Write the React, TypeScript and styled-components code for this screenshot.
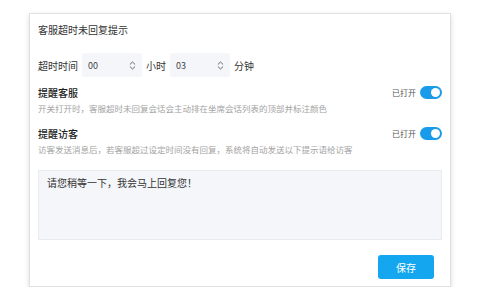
import styled, { createGlobalStyle } from 'styled-components'

const GlobalStyle = createGlobalStyle`
  html, body {
    margin: 0;
    padding: 0;
    background: #fff;
  }
  body {
    font-family: "Noto Sans CJK SC", "Noto Sans", sans-serif;
    color: #333;
  }
`

const Page = styled.div`
  padding: 13px 29px 0;
`

const Card = styled.div`
  width: 422px;
  height: 274px;
  box-sizing: border-box;
  border: 1px solid #e0e0e0;
  background: #fff;
  box-shadow: 0 2px 5px rgba(0, 0, 0, 0.14);
  padding: 9px 8px 0;
  display: flex;
  flex-direction: column;
`

const Title = styled.div`
  font-size: 10px;
  line-height: 14px;
  color: #333;
`

const TimeRow = styled.div`
  display: flex;
  align-items: center;
  margin-top: 16px;
  height: 24px;
  font-size: 10px;
  gap: 4px;
`

const Select = styled.div`
  width: 60px;
  height: 24px;
  box-sizing: border-box;
  background: #f4f6f9;
  border-radius: 2px;
  display: flex;
  align-items: center;
  justify-content: space-between;
  padding: 0 6px;
  font-size: 9px;
  color: #444;
`

const Chevron = () => (
  <svg width="7" height="9" viewBox="0 0 7 9" fill="none" stroke="#666" strokeWidth="1" strokeLinecap="round" strokeLinejoin="round">
    <path d="M1.2 3.2 L3.5 1 L5.8 3.2" />
    <path d="M1.2 5.8 L3.5 8 L5.8 5.8" />
  </svg>
)

const Section = styled.div<{ top: number }>`
  margin-top: ${({ top }) => top}px;
`

const HeadRow = styled.div`
  display: flex;
  align-items: center;
  justify-content: space-between;
  height: 14px;
`

const Label = styled.div`
  font-size: 10px;
  font-weight: 500;
  color: #222;
`

const SwitchWrap = styled.div`
  display: flex;
  align-items: center;
  gap: 4px;
  font-size: 8px;
  color: #555;
`

const Switch = styled.div<{ on: boolean }>`
  width: 22px;
  height: 13px;
  border-radius: 7px;
  background: ${({ on }) => (on ? '#1a9bea' : '#ccc')};
  position: relative;
  &::after {
    content: '';
    position: absolute;
    top: 2px;
    left: ${({ on }) => (on ? '11px' : '2px')};
    width: 9px;
    height: 9px;
    border-radius: 50%;
    background: #fff;
  }
`

const Desc = styled.div`
  margin-top: 3px;
  font-size: 8.5px;
  line-height: 12px;
  color: #a3a3a3;
`

const TextArea = styled.div`
  margin-top: 15px;
  height: 70px;
  box-sizing: border-box;
  background: #f4f6f9;
  border: 1px solid #e8ebef;
  padding: 6px 8px;
  font-size: 10px;
  line-height: 12px;
  color: #333;
`

const Footer = styled.div`
  display: flex;
  justify-content: flex-end;
  margin-top: 15px;
  padding-right: 8px;
`

const SaveButton = styled.button`
  width: 56px;
  height: 24px;
  border: none;
  border-radius: 3px;
  background: #14a6ee;
  color: #fff;
  font-family: inherit;
  font-size: 10px;
  padding: 0;
  cursor: pointer;
`

const App = () => {
  return (
    <Page>
      <GlobalStyle />
      <Card>
        <Title>客服超时未回复提示</Title>
        <TimeRow>
          <span>超时时间</span>
          <Select>
            <span>00</span>
            <Chevron />
          </Select>
          <span>小时</span>
          <Select>
            <span>03</span>
            <Chevron />
          </Select>
          <span>分钟</span>
        </TimeRow>
        <Section top={8}>
          <HeadRow>
            <Label>提醒客服</Label>
            <SwitchWrap>
              已打开
              <Switch on />
            </SwitchWrap>
          </HeadRow>
          <Desc>开关打开时，客服超时未回复会话会主动排在坐席会话列表的顶部并标注颜色</Desc>
        </Section>
        <Section top={12}>
          <HeadRow>
            <Label>提醒访客</Label>
            <SwitchWrap>
              已打开
              <Switch on />
            </SwitchWrap>
          </HeadRow>
          <Desc>访客发送消息后，若客服超过设定时间没有回复，系统将自动发送以下提示语给访客</Desc>
        </Section>
        <TextArea>请您稍等一下，我会马上回复您！</TextArea>
        <Footer>
          <SaveButton>保存</SaveButton>
        </Footer>
      </Card>
    </Page>
  )
}

export default App
